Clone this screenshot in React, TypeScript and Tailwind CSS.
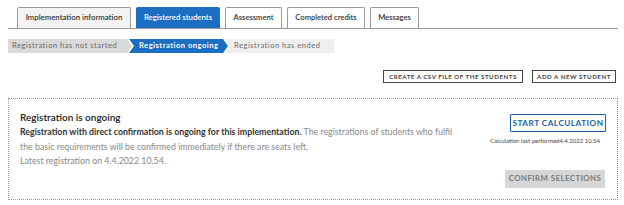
const tabs = [
  { label: "Implementation information", width: "w-[114px]", active: false, shaded: true },
  { label: "Registered students", width: "w-[84px]", active: true, shaded: false },
  { label: "Assessment", width: "w-[57px]", active: false, shaded: false },
  { label: "Completed credits", width: "w-[78px]", active: false, shaded: false },
  { label: "Messages", width: "w-[49px]", active: false, shaded: false },
];

const Tabs = () => (
  <div className="flex items-end gap-[5px] border-b border-[#9a9a9a] pl-[9px]">
    {tabs.map((tab) => (
      <div
        key={tab.label}
        className={`${tab.width} ${
          tab.active
            ? "flex h-[21px] items-center justify-center whitespace-nowrap rounded-t-[2px] bg-[#1b6ec2] text-[7.8px] font-semibold text-white"
            : tab.shaded
              ? "flex h-[21px] items-center justify-center whitespace-nowrap rounded-t-[2px] border border-b-0 border-[#9a9a9a] bg-[#f3f3f3] text-[7.8px] font-semibold text-[#333]"
              : "flex h-[21px] items-center justify-center whitespace-nowrap rounded-t-[2px] border border-b-0 border-[#9a9a9a] bg-white text-[7.6px] font-semibold text-[#333]"
        }`}
      >
        {tab.label}
      </div>
    ))}
  </div>
);

const Steps = () => (
  <div className="mt-[10px] flex h-[14px] text-[7.5px] tracking-[0.07em]">
    <div className="flex w-[124px] items-center bg-[#d9d9d9] pl-[4px] text-[#6b6b6b] [clip-path:polygon(0_0,calc(100%-5px)_0,100%_50%,calc(100%-5px)_100%,0_100%)]">
      Registration has not started
    </div>
    <div className="-ml-[3px] flex w-[99px] items-center bg-[#1b6ec2] pl-[10px] font-bold text-white [clip-path:polygon(0_0,calc(100%-5px)_0,100%_50%,calc(100%-5px)_100%,0_100%,5px_50%)]">
      Registration ongoing
    </div>
    <div className="-ml-[3px] flex w-[109px] items-center bg-[#efefef] pl-[9px] text-[#6b6b6b] [clip-path:polygon(0_0,100%_0,100%_100%,0_100%,5px_50%)]">
      Registration has ended
    </div>
  </div>
);

export default function App() {
  return (
    <div className="h-[205px] w-[624px] bg-white pl-[8px] pr-[6px] pt-[7px] font-['Lato',sans-serif] text-[#333]">
      <Tabs />
      <Steps />
      <div className="mt-[17px] flex justify-end gap-[9px] pr-[2px]">
        <button className="flex h-[13px] w-[140px] items-center justify-center border border-[#444] text-[6.2px] font-bold tracking-[0.08em] text-[#444]">
          CREATE A CSV FILE OF THE STUDENTS
        </button>
        <button className="flex h-[13px] w-[84px] items-center justify-center border border-[#444] text-[6.2px] font-bold tracking-[0.08em] text-[#444]">
          ADD A NEW STUDENT
        </button>
      </div>
      <div className="mt-[15px] flex h-[102px] justify-between border border-dotted border-[#9a9a9a] pl-[11px] pr-[11px] pt-[11px]">
        <div>
          <h2 className="text-[10px] leading-[14px] font-semibold text-[#222]">
            Registration is ongoing
          </h2>
          <p className="mt-[1px] whitespace-nowrap text-[8.8px] leading-[14.5px] text-[#888]">
            <span className="font-bold text-[#333]">
              Registration with direct confirmation is ongoing for this
              implementation.
            </span>{" "}
            The registrations of students who fulfil
            <br />
            the basic requirements will be confirmed immediately if there are
            seats left.
            <br />
            Latest registration on 4.4.2022 10.54.
          </p>
        </div>
        <div className="flex flex-col items-end pt-[4px]">
          <button className="flex h-[18px] w-[96px] items-center justify-center rounded-[1px] border border-[#1b5fa8] text-[8.2px] font-bold tracking-[0.06em] text-[#1b5fa8]">
            START CALCULATION
          </button>
          <div className="mr-[6px] mt-[5px] text-[6px] leading-[8px] text-[#444]">
            Calculation last performed4.4.2022 10.54
          </div>
          <button className="mt-[25px] mr-[1px] flex h-[18px] w-[100px] items-center justify-center bg-[#d6d6d6] text-[7.8px] font-bold tracking-[0.06em] text-[#7a7a7a]">
            CONFIRM SELECTIONS
          </button>
        </div>
      </div>
    </div>
  );
}
